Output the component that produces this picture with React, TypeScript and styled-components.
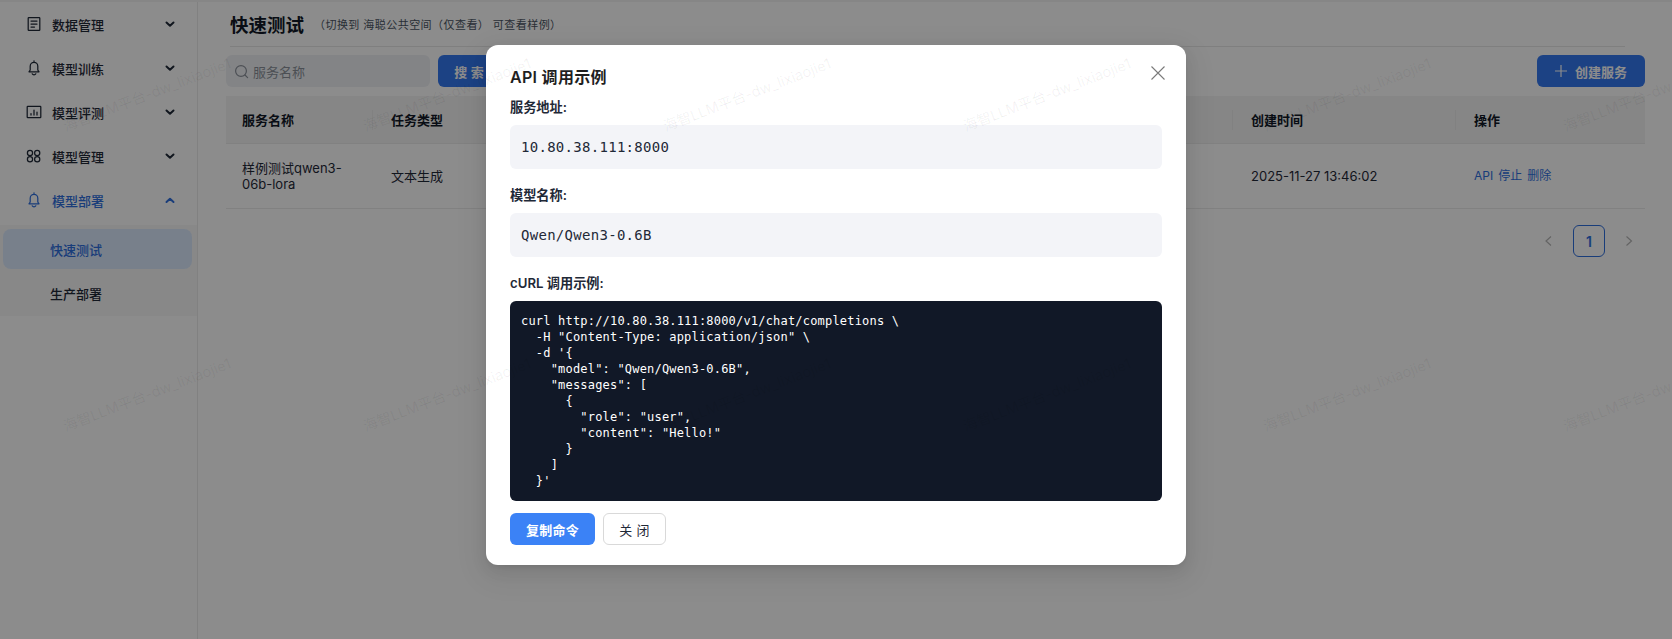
import React from "react";
import styled, { createGlobalStyle } from "styled-components";

const sans = `Inter, "Noto Sans CJK SC", sans-serif`;
const mono = `"DejaVu Sans Mono", "Noto Sans CJK SC", monospace`;

const Global = createGlobalStyle`
  html, body { margin: 0; padding: 0; background: #fff; }
  * { box-sizing: border-box; }
  body { font-family: ${sans}; color: #1f2937; }
`;

const Page = styled.div`
  position: relative;
  width: 1672px;
  height: 639px;
  overflow: hidden;
  background: #fff;
  display: flex;
  flex-direction: column;
`;
const TopStrip = styled.div`
  height: 2px;
  flex: none;
  background: #f4f4f4;
`;
const Body = styled.div`
  flex: 1;
  display: flex;
  min-height: 0;
`;
const Sidebar = styled.aside`
  width: 198px;
  flex: none;
  border-right: 1px solid #ececec;
  background: #fff;
  display: flex;
  flex-direction: column;
`;
const MenuRow = styled.div<{ $active?: boolean }>`
  height: 44px;
  flex: none;
  display: flex;
  align-items: center;
  padding: 0 22px 0 26px;
  font-size: 13px;
  font-weight: 500;
  color: ${(p) => (p.$active ? "#2f6fde" : "#1f2937")};
`;
const MenuIcon = styled.span`
  width: 16px;
  height: 16px;
  margin-right: 10px;
  display: flex;
  color: inherit;
`;
const MenuText = styled.span`
  flex: 1;
`;
const SubMenu = styled.div`
  margin-top: 3px;
  background: #f8f8f8;
  padding: 4px 5px 3px 3px;
  display: flex;
  flex-direction: column;
  gap: 4px;
`;
const SubItem = styled.div<{ $active?: boolean }>`
  height: 40px;
  display: flex;
  align-items: center;
  padding-left: 47px;
  font-size: 13px;
  font-weight: 500;
  border-radius: 8px;
  color: ${(p) => (p.$active ? "#2f6fde" : "#1f2937")};
  background: ${(p) => (p.$active ? "#dbeafe" : "transparent")};
`;
const Main = styled.main`
  flex: 1;
  min-width: 0;
  padding: 0 27px 0 28px;
`;
const Header = styled.header`
  height: 45px;
  margin: 0 20px 8px 4px;
  display: flex;
  align-items: center;
  gap: 10px;
  padding-bottom: 1px;
  border-bottom: 1px solid #e8e8e8;
`;
const Title = styled.h1`
  margin: 0;
  font-size: 18.5px;
  font-weight: 700;
  color: #111827;
`;
const Hint = styled.span`
  font-size: 11px;
  letter-spacing: 0.45px;
  color: #4b5563;
`;
const Toolbar = styled.div`
  height: 32px;
  display: flex;
  align-items: stretch;
  gap: 8px;
  margin-bottom: 9px;
`;
const SearchBox = styled.div`
  width: 204px;
  border-radius: 6px;
  background: #eff1f5;
  display: flex;
  align-items: center;
  gap: 4px;
  padding-left: 8px;
  font-size: 13px;
  color: #8b919a;
`;
const FilledButton = styled.button<{ $wide?: boolean }>`
  width: ${(p) => (p.$wide ? "108px" : "62px")};
  border: 0;
  border-radius: 6px;
  background: #3478f0;
  color: #fff;
  font-family: ${sans};
  font-size: 13px;
  font-weight: 600;
  display: flex;
  align-items: center;
  justify-content: center;
  gap: 8px;
  padding: 0;
`;
const Spacer = styled.div`
  flex: 1;
`;
const Table = styled.div`
  display: grid;
  grid-template-columns: 149px 149px 711px 223px 187px;
  font-size: 13px;
  color: #1f2937;
`;
const HeadCell = styled.div<{ $sep?: boolean }>`
  position: relative;
  height: 48px;
  display: flex;
  align-items: center;
  padding-left: 16px;
  background: #f5f5f5;
  font-weight: 600;
  color: #111827;
  border-bottom: 1px solid #ebebeb;
  &::after {
    content: "";
    display: ${(p) => (p.$sep ? "block" : "none")};
    position: absolute;
    right: 2px;
    top: 14px;
    height: 20px;
    width: 1px;
    background: #ececec;
  }
`;
const Cell = styled.div`
  height: 65px;
  display: flex;
  align-items: center;
  gap: 5px;
  padding: 0 16px;
  line-height: 16px;
  border-bottom: 1px solid #ebebeb;
`;
const LinkText = styled.span`
  color: #2f6fde;
  font-size: 12px;
`;
const Pager = styled.div`
  display: flex;
  justify-content: flex-end;
  align-items: center;
  gap: 20px;
  margin-top: 16px;
  padding-right: 11px;
  height: 32px;
`;
const PagerArrow = styled.span`
  width: 9px;
  display: flex;
  color: #b6b6b6;
`;
const PageNum = styled.div`
  width: 32px;
  height: 32px;
  border: 1px solid #2f6fde;
  border-radius: 6px;
  color: #2f6fde;
  font-size: 14px;
  font-weight: 600;
  display: flex;
  align-items: center;
  justify-content: center;
`;
const Overlay = styled.div`
  position: absolute;
  inset: 0;
  background: rgba(0, 0, 0, 0.45);
  display: flex;
  justify-content: center;
  align-items: flex-start;
  padding-top: 45px;
`;
const Modal = styled.div`
  position: relative;
  width: 700px;
  height: 520px;
  background: #fff;
  border-radius: 12px;
  padding: 20px 24px;
  box-shadow: 0 6px 16px 0 rgba(0, 0, 0, 0.08), 0 3px 6px -4px rgba(0, 0, 0, 0.12),
    0 9px 28px 8px rgba(0, 0, 0, 0.05);
  display: flex;
  flex-direction: column;
`;
const ModalTitle = styled.h2`
  margin: 0 0 7px;
  font-size: 16px;
  line-height: 24px;
  font-weight: 600;
  letter-spacing: 0.3px;
  color: #1f1f1f;
`;
const CloseBtn = styled.button`
  position: absolute;
  top: 20px;
  right: 20px;
  width: 16px;
  height: 16px;
  padding: 0;
  border: 0;
  background: none;
  color: #7a7a7a;
  display: flex;
`;
const Field = styled.div`
  margin-bottom: 15px;
`;
const Label = styled.div`
  font-size: 13.2px;
  line-height: 22px;
  font-weight: 600;
  color: #1f2937;
  margin-bottom: 7px;
`;
const ValueBox = styled.div`
  height: 44px;
  background: #f3f4f8;
  border-radius: 6px;
  display: flex;
  align-items: center;
  padding: 0 11px;
  font-family: ${mono};
  font-size: 14px;
  letter-spacing: 0.29px;
  color: #1f2937;
`;
const CodeBlock = styled.pre`
  margin: 0 0 12px;
  height: 200px;
  padding: 12px 11px;
  border-radius: 6px;
  background: #111827;
  color: #ffffff;
  font-family: ${mono};
  font-size: 12px;
  line-height: 16px;
  letter-spacing: 0.19px;
`;
const Actions = styled.div`
  display: flex;
  gap: 8px;
`;
const PrimaryBtn = styled.button`
  width: 85px;
  height: 32px;
  padding: 0;
  border: 0;
  border-radius: 6px;
  background: #3b82f6;
  color: #fff;
  font-family: ${sans};
  font-size: 13px;
  font-weight: 600;
  letter-spacing: 0.2px;
`;
const GhostBtn = styled.button`
  width: 63px;
  height: 32px;
  padding: 0;
  border: 1px solid #d9d9d9;
  border-radius: 6px;
  background: #fff;
  color: #1f2937;
  font-family: ${sans};
  font-size: 13px;
  letter-spacing: 0.3px;
`;
const WatermarkLayer = styled.div`
  position: absolute;
  left: -3px;
  top: -55px;
  width: 1800px;
  height: 600px;
  display: grid;
  grid-template-columns: repeat(6, 300px);
  grid-auto-rows: 300px;
  pointer-events: none;
`;
const Watermark = styled.div`
  display: flex;
  align-items: center;
  justify-content: center;
  white-space: nowrap;
  font-size: 14.5px;
  line-height: 16px;
  color: rgba(0, 0, 0, 0.06);
  transform: rotate(-21deg);
`;

const Svg = ({ children, size = 16 }: { children: React.ReactNode; size?: number }) => (
  <svg width={size} height={size} viewBox="0 0 16 16" fill="none" stroke="currentColor" strokeWidth="1.25" strokeLinecap="round" strokeLinejoin="round">
    {children}
  </svg>
);
const DocIcon = () => (
  <Svg>
    <rect x="2.2" y="1.6" width="11.6" height="12.8" rx="0.6" />
    <path d="M5 5h6M5 8h6M5 11h3.5" />
  </Svg>
);
const BellIcon = () => (
  <Svg>
    <path d="M8 0.8v1.4M4.2 10V6.2a3.8 3.8 0 0 1 7.6 0V10l1.2 1.8H3L4.2 10ZM6.2 13.8a2 2 0 0 0 3.6 0" />
  </Svg>
);
const ChartIcon = () => (
  <Svg>
    <rect x="1.2" y="2.4" width="13.6" height="11.2" rx="0.6" />
    <path d="M5 11V9.5M8 11V6M11 11V8" />
  </Svg>
);
const GridIcon = () => (
  <Svg>
    <circle cx="4" cy="4.9" r="2.6" />
    <circle cx="11.2" cy="4.9" r="2.6" />
    <circle cx="4" cy="11.3" r="2.6" />
    <circle cx="11.2" cy="11.3" r="2.6" />
  </Svg>
);
const Chevron = ({ up }: { up?: boolean }) => (
  <svg width="10" height="7" viewBox="0 0 10 7" fill="none" stroke="currentColor" strokeWidth="2" strokeLinecap="round" strokeLinejoin="round">
    <path d={up ? "M1.5 5 5 1.8 8.5 5" : "M1.5 1.5 5 4.7 8.5 1.5"} />
  </svg>
);
const SearchIcon = () => (
  <svg width="15" height="15" viewBox="0 0 15 15" fill="none" stroke="#8b919a" strokeWidth="1.2" strokeLinecap="round">
    <circle cx="7" cy="7" r="5.4" />
    <path d="m11 11 2.6 2.6" />
  </svg>
);
const PlusIcon = () => (
  <svg width="12" height="12" viewBox="0 0 12 12" stroke="currentColor" strokeWidth="1.2">
    <path d="M6 0v12M0 6h12" />
  </svg>
);
const PagerChevron = ({ right }: { right?: boolean }) => (
  <svg width="9" height="12" viewBox="0 0 9 12" fill="none" stroke="currentColor" strokeWidth="1.2">
    <path d={right ? "M1.5 1.5 6.5 6l-5 4.5" : "M7 1.5 2 6l5 4.5"} />
  </svg>
);

const menu = [
  { label: "数据管理", icon: <DocIcon /> },
  { label: "模型训练", icon: <BellIcon /> },
  { label: "模型评测", icon: <ChartIcon /> },
  { label: "模型管理", icon: <GridIcon /> },
];

const curl = `curl http://10.80.38.111:8000/v1/chat/completions \\
  -H "Content-Type: application/json" \\
  -d '{
    "model": "Qwen/Qwen3-0.6B",
    "messages": [
      {
        "role": "user",
        "content": "Hello!"
      }
    ]
  }'`;

export default function App() {
  return (
    <Page>
      <Global />
      <TopStrip />
      <Body>
        <Sidebar>
          {menu.map((m) => (
            <MenuRow key={m.label}>
              <MenuIcon>{m.icon}</MenuIcon>
              <MenuText>{m.label}</MenuText>
              <Chevron />
            </MenuRow>
          ))}
          <MenuRow $active>
            <MenuIcon>
              <BellIcon />
            </MenuIcon>
            <MenuText>模型部署</MenuText>
            <Chevron up />
          </MenuRow>
          <SubMenu>
            <SubItem $active>快速测试</SubItem>
            <SubItem>生产部署</SubItem>
          </SubMenu>
        </Sidebar>
        <Main>
          <Header>
            <Title>快速测试</Title>
            <Hint>（切换到 海聪公共空间（仅查看） 可查看样例）</Hint>
          </Header>
          <Toolbar>
            <SearchBox>
              <SearchIcon />
              服务名称
            </SearchBox>
            <FilledButton>搜 索</FilledButton>
            <Spacer />
            <FilledButton $wide>
              <PlusIcon />
              创建服务
            </FilledButton>
          </Toolbar>
          <Table>
            <HeadCell $sep>服务名称</HeadCell>
            <HeadCell>任务类型</HeadCell>
            <HeadCell $sep />
            <HeadCell $sep>创建时间</HeadCell>
            <HeadCell>操作</HeadCell>
            <Cell>样例测试qwen3-06b-lora</Cell>
            <Cell>文本生成</Cell>
            <Cell />
            <Cell>2025-11-27 13:46:02</Cell>
            <Cell>
              <LinkText>API</LinkText>
              <LinkText>停止</LinkText>
              <LinkText>删除</LinkText>
            </Cell>
          </Table>
          <Pager>
            <PagerArrow>
              <PagerChevron />
            </PagerArrow>
            <PageNum>1</PageNum>
            <PagerArrow>
              <PagerChevron right />
            </PagerArrow>
          </Pager>
        </Main>
      </Body>
      <Overlay>
        <Modal>
          <ModalTitle>API 调用示例</ModalTitle>
          <CloseBtn aria-label="关闭">
            <svg width="16" height="16" viewBox="0 0 16 16" stroke="currentColor" strokeWidth="1.1">
              <path d="m1.5 1.5 13 13M14.5 1.5l-13 13" />
            </svg>
          </CloseBtn>
          <Field>
            <Label>服务地址:</Label>
            <ValueBox>10.80.38.111:8000</ValueBox>
          </Field>
          <Field>
            <Label>模型名称:</Label>
            <ValueBox>Qwen/Qwen3-0.6B</ValueBox>
          </Field>
          <Label>cURL 调用示例:</Label>
          <CodeBlock>{curl}</CodeBlock>
          <Actions>
            <PrimaryBtn>复制命令</PrimaryBtn>
            <GhostBtn>关 闭</GhostBtn>
          </Actions>
        </Modal>
      </Overlay>
      <WatermarkLayer>
        {Array.from({ length: 12 }, (_, i) => (
          <Watermark key={i}>海智LLM平台-dw_lixiaojie1</Watermark>
        ))}
      </WatermarkLayer>
    </Page>
  );
}
